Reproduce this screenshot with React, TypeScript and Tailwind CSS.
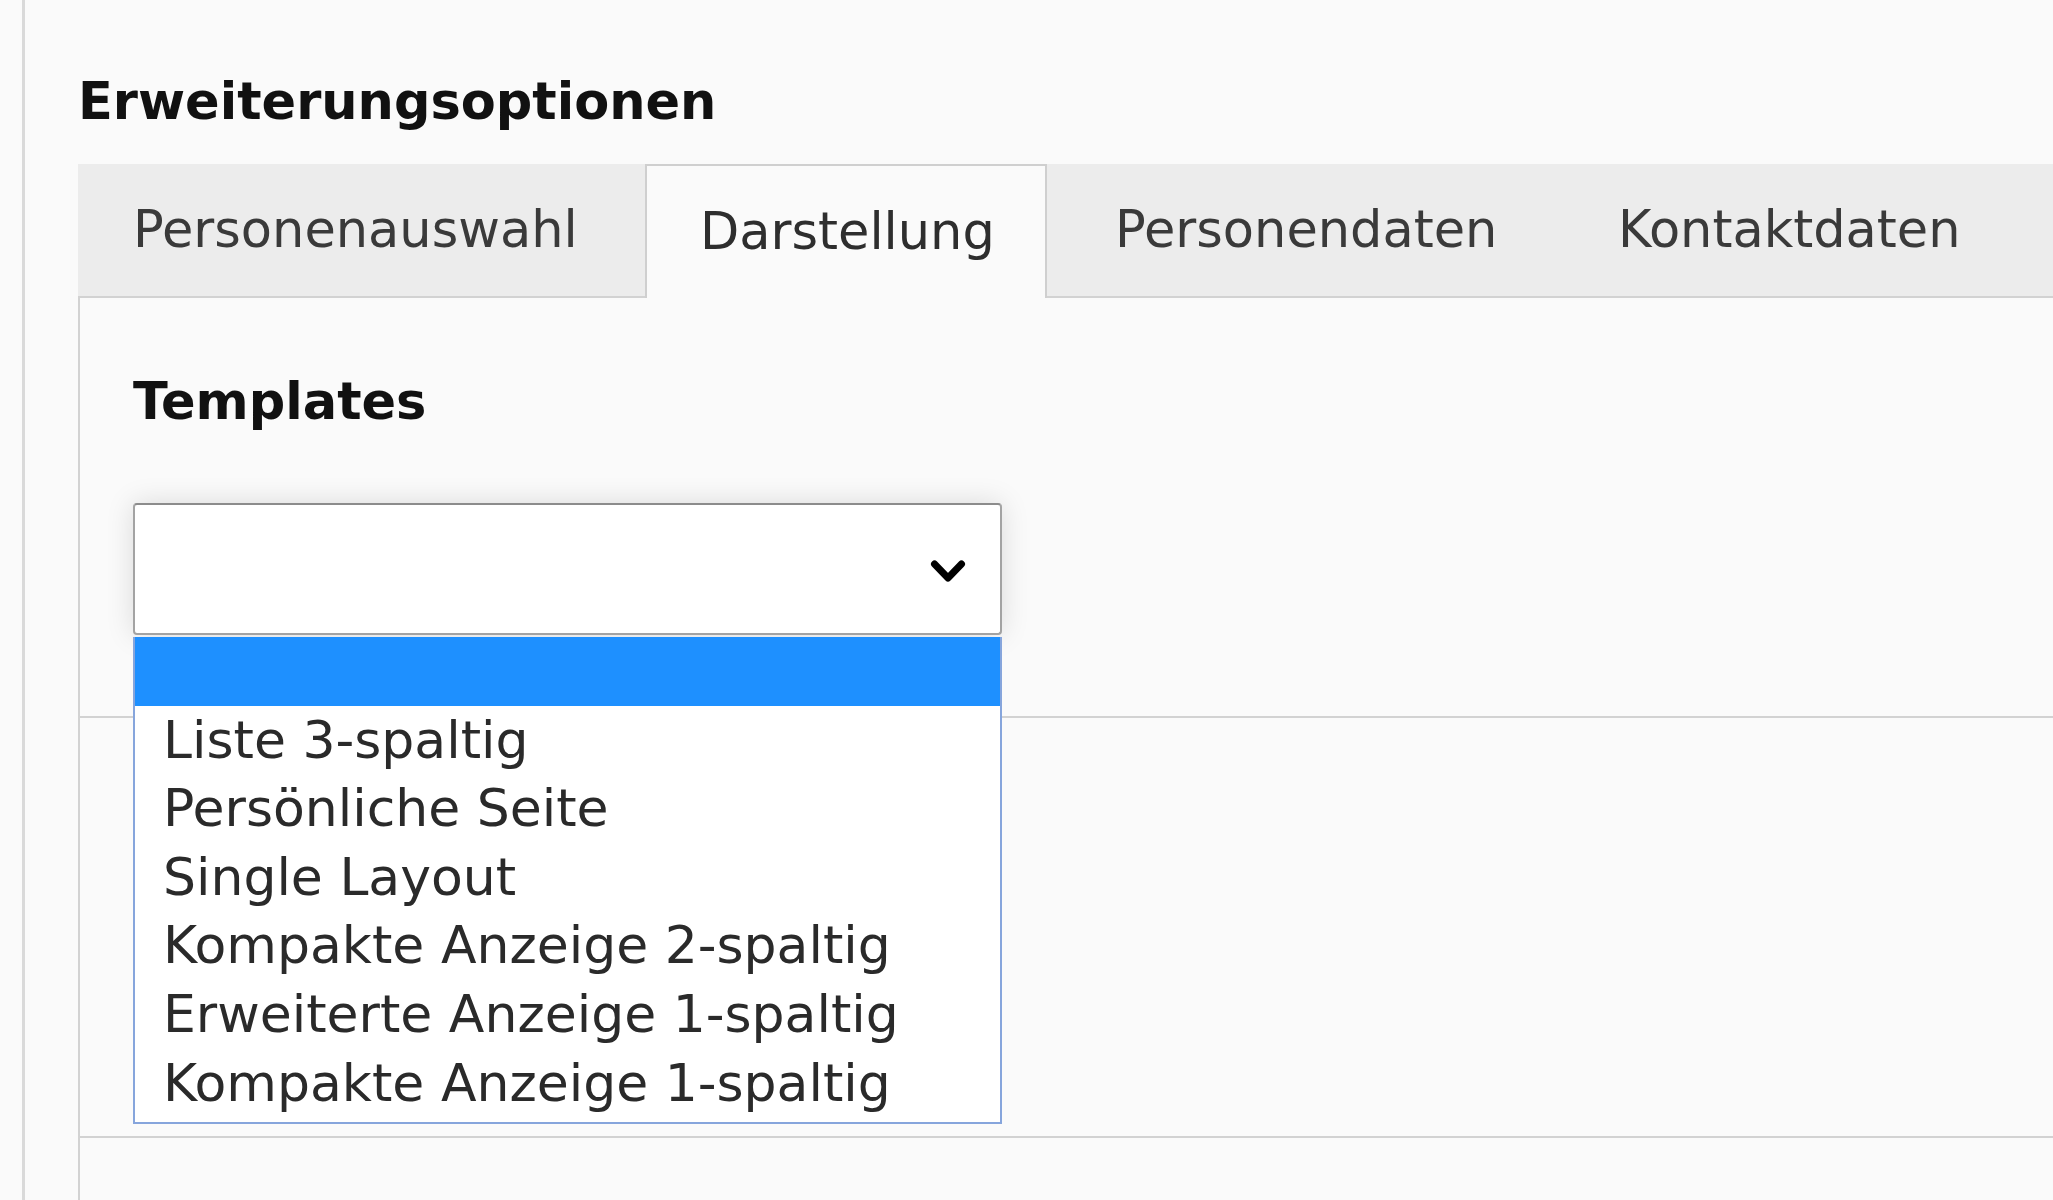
import React from "react";

const items = [
  "Liste 3-spaltig",
  "Persönliche Seite",
  "Single Layout",
  "Kompakte Anzeige 2-spaltig",
  "Erweiterte Anzeige 1-spaltig",
  "Kompakte Anzeige 1-spaltig",
];

export default function App() {
  return (
    <div className="flex h-[1200px] w-full overflow-hidden bg-[#fafafa] font-['DejaVu_Sans',Verdana,sans-serif] text-[51px]">
      <div className="w-[22px] shrink-0" />
      <div className="w-[3px] shrink-0 bg-[#d9d9d9]" />
      <div className="flex min-w-0 flex-1 flex-col pl-[53px] pt-[72px]">
        <h1 className="h-[60px] whitespace-nowrap font-bold leading-[60px] text-[#111]">
          Erweiterungsoptionen
        </h1>

        <div className="mt-[32px] flex h-[134px] shrink-0 border-b-2 border-[#d2d2d2] bg-[#ececec] text-[#3a3a3a]">
          <div className="flex w-[567px] shrink-0 items-center whitespace-nowrap pl-[55px] leading-[60px]">
            Personenauswahl
          </div>
          <div className="flex h-[134px] w-[402px] shrink-0 items-center self-start whitespace-nowrap border-x-2 border-t-2 border-[#cfcfcf] bg-[#fafafa] pl-[53px] leading-[60px] text-[#2e2e2e]">
            Darstellung
          </div>
          <div className="flex w-[507px] shrink-0 items-center whitespace-nowrap pl-[68px] leading-[60px]">
            Personendaten
          </div>
          <div className="flex shrink-0 items-center whitespace-nowrap pl-[64px] leading-[60px]">
            Kontaktdaten
          </div>
        </div>

        <div className="flex flex-1 flex-col border-l-2 border-[#d2d2d2]">
          <div className="h-[420px] shrink-0 border-b-2 border-[#d2d2d2] pl-[53px] pt-[74px]">
            <div className="h-[60px] font-bold leading-[60px] text-[#111]">Templates</div>
            <div className="relative mt-[71px] w-[869px]">
              <div className="flex h-[132px] items-center justify-end rounded-[4px] border-2 border-[#a3a3a3] border-t-[#8c8c8c] bg-white pr-[34px] shadow-[0_0_28px_rgba(0,0,0,0.13)]">
                <svg className="mt-[6px]" width="36" height="28" viewBox="0 0 36 28" fill="none">
                  <polyline
                    points="4.5,6 18,20 31.5,6"
                    stroke="#000"
                    strokeWidth="7"
                    strokeLinecap="round"
                    strokeLinejoin="round"
                  />
                </svg>
              </div>
              <div className="absolute left-0 top-[134px] z-10 w-full border-x-2 border-b-2 border-[#86a5dc] bg-white pb-[5px] text-[52px]">
                <div className="h-[68.6px] bg-[#1e90ff]" />
                {items.map((it) => (
                  <div
                    key={it}
                    className="h-[68.6px] whitespace-nowrap pl-[28px] leading-[68.6px] text-[#2a2a2a]"
                  >
                    {it}
                  </div>
                ))}
              </div>
            </div>
          </div>
          <div className="h-[420px] shrink-0 border-b-2 border-[#d2d2d2]" />
        </div>
      </div>
    </div>
  );
}
